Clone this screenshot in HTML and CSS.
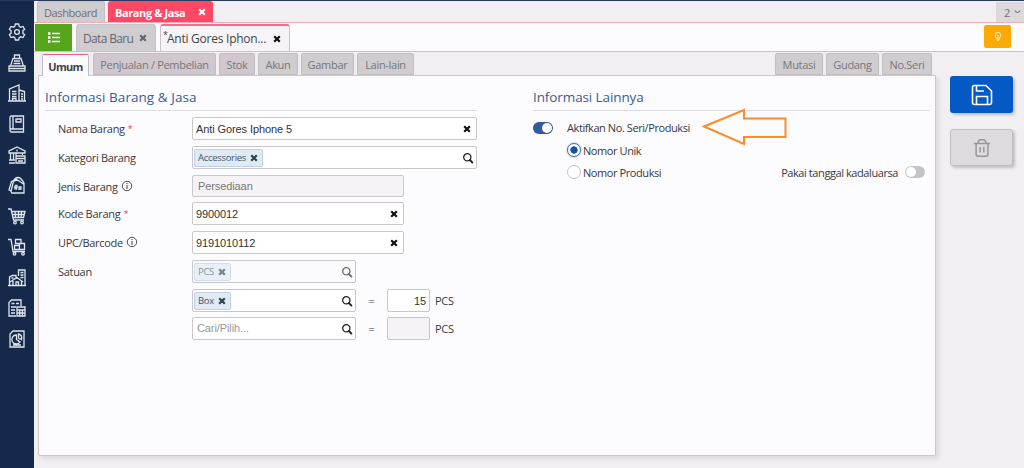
FILE: index.html
```html
<!DOCTYPE html>
<html lang="id">
	<head>
		<meta charset="UTF-8" />
		<meta name="viewport" content="width=device-width, initial-scale=1.0" />
		<title>Barang &amp; Jasa</title>
		<link rel="stylesheet" href="styles.css" />
	</head>
	<body>
		<svg class="defs" width="0" height="0">
			<symbol id="times" viewBox="0 0 10 10">
				<path d="M2.200 2.200l5.600 5.600M7.800 2.200l-5.600 5.600" fill="none" stroke="currentColor" stroke-width="2.200" />
			</symbol>
			<symbol id="search" viewBox="0 0 12 12">
				<circle cx="5.300" cy="5.300" r="3.600" fill="none" stroke="currentColor" stroke-width="1.300" />
				<path d="M7.900 8l2.500 2.600" stroke="currentColor" stroke-width="1.900" stroke-linecap="round" />
			</symbol>
			<symbol id="info" viewBox="0 0 12 12">
				<circle cx="6" cy="6" r="4.700" fill="none" stroke="currentColor" stroke-width="0.900" />
				<path d="M6 5v4M6 3v1.100" stroke="currentColor" stroke-width="1" />
			</symbol>
		</svg>
		<div class="app">
			<nav class="sidebar">
				<!-- settings -->
				<svg viewBox="0 0 18 18">
					<path d="M7.400 1h3.200l.6 2.300 1.500.9 2.300-.7 1.600 2.800-1.700 1.600v2.200l1.700 1.600-1.600 2.800-2.300-.7-1.500.9-.6 2.300H7.400l-.6-2.300-1.500-.9-2.300.7-1.600-2.800 1.700-1.600V7.900L1.400 6.300 3 3.500l2.300.7 1.500-.9z" />
					<circle cx="9" cy="9" r="2.400" />
				</svg>
				<!-- cash register -->
				<svg viewBox="0 0 18 18">
					<path d="M6.500 1h5v3.500h-5zM5 4.500h8l2.500 7.500h-13zM1 12h16v5H1zM1 14.500h16M6 7h6M5.500 9.500h7" />
				</svg>
				<!-- company -->
				<svg viewBox="0 0 18 18">
					<path d="M1.500 17V5L11 1v16M11 6l5.500 1.500V17M0 17h18M4 7.500h4.500M4 10h4.500M4 12.500h4.500M4.500 17v-2.500H8V17M13 10h2M13 12.500h2M13 15h2" />
				</svg>
				<!-- ledger -->
				<svg viewBox="0 0 18 18">
					<path d="M3.500 1H15.500v16H3.500q-1.500 0-1.500-1.500v-13Q2 1 3.500 1zM2 14h13.500M5 1v13M8 4h5v3H8z" />
				</svg>
				<!-- bank -->
				<svg viewBox="0 0 18 18">
					<path d="M9 1l8 4v2H1V5zM2.500 7v7M5.500 7v7M8 7v3M14.500 7v2M1 14h6M1 17h6M8 10h9v7H8zM8 12.500h9M10 15h5M9 3.500v2" />
				</svg>
				<!-- price tag -->
				<svg viewBox="0 0 18 18">
					<path d="M5.500 5Q7 1.500 10 1.500T16 7v10H4L3 15.500 5.500 5l4-1 6 4M3 15L1 14l2.500-8.500L9 3M7 9.500v4M7 9.500h2v2H7l2 2M11 14v-3h2v2h-2" />
				</svg>
				<!-- sales -->
				<svg viewBox="0 0 18 18">
					<path d="M0 2h3l2.500 11H16M3.500 4.500H17L15.500 10.500H5M4.500 7.500h12M7 4.500l.5 6M10.500 4.500v6M13.500 4.500l-.5 6" />
					<circle cx="7" cy="15.500" r="1.300" />
					<circle cx="14" cy="15.500" r="1.300" />
				</svg>
				<!-- purchases -->
				<svg viewBox="0 0 18 18">
					<path d="M0 1.500h3L5 13.500h12M6.500 7.500h5v4h-5zM11.500 5.500h5v6h-5zM7.500 1.500h5.500v4H7.500z" />
					<circle cx="6.500" cy="15.800" r="1.300" />
					<circle cx="15" cy="15.800" r="1.300" />
				</svg>
				<!-- fixed assets -->
				<svg viewBox="0 0 18 18">
					<path d="M10.500 7V1H17v15.500M1.500 16.500V8l3-1.500H8V10M12.500 3.500h3M12.500 6h3M12.500 8.500h3M3.500 9h2M2 13l7-4.500 6 4.500M5 12v4.500M13.500 12v4.500M8 16v-3h2.500v3M0 16.500h18" />
				</svg>
				<!-- tax -->
				<svg viewBox="0 0 18 18">
					<path d="M8 17H1V3.500L3.500 1H13v6M3.500 4.500h3M8 4.500h3M3 8h5M3 11h4M3 14h4M9 8h8v9H9zM9 11h8M11.700 11v6M14.400 11v6M9 14h8" />
				</svg>
				<!-- reports -->
				<svg viewBox="0 0 18 18">
					<path d="M5 1h11v16H2V4zM8.500 5v4.500L12 12A4.500 4.500 0 1 1 8.500 5zM10.500 4v4l3 1.500Q14.500 5 10.500 4zM5 15h8" />
				</svg>
			</nav>
			<div class="main">
				<header class="module-tabs">
					<a class="mtab">Dashboard</a>
					<a class="mtab active">Barang &amp; Jasa <svg class="x"><use href="#times" /></svg></a>
					<a class="counter">2
						<svg viewBox="0 0 8 6"><path d="M1 1.500q3 4 6 0" fill="none" stroke="#777" stroke-width="1.200" /></svg>
					</a>
				</header>
				<div class="doc-tabs">
					<a class="list-btn">
						<svg viewBox="0 0 14 12"><path d="M5 2h8M5 6h8M5 10h8" stroke-width="1.500" /><path d="M1 2h2.500M1 6h2.500M1 10h2.500" stroke-width="2.500" /></svg>
					</a>
					<a class="dtab">Data Baru <svg class="x"><use href="#times" /></svg></a>
					<a class="dtab active"><sup>*</sup><span>Anti Gores Iphon...</span><svg class="x"><use href="#times" /></svg></a>
					<a class="hint-btn">
						<svg viewBox="0 0 10 12"><path d="M3.500 7.500Q1.800 6.200 2 4.500A3 3 0 0 1 8 4.500Q8.200 6.200 6.500 7.500V9h-3zM3.800 10.500h2.400M5 8V5M4 4.500l1 1 1-1" /></svg>
					</a>
				</div>
				<div class="content">
					<div class="form">
						<div class="tabs">
							<a class="tab active">Umum</a>
							<a class="tab t-jual">Penjualan / Pembelian</a>
							<a class="tab t-stok">Stok</a>
							<a class="tab t-akun">Akun</a>
							<a class="tab t-gambar">Gambar</a>
							<a class="tab t-lain">Lain-lain</a>
							<a class="tab t-mutasi">Mutasi</a>
							<a class="tab t-gudang">Gudang</a>
							<a class="tab t-seri">No.Seri</a>
						</div>
						<div class="panel">
							<section class="col-left">
								<h2>Informasi Barang &amp; Jasa</h2>
								<div class="rows">
									<label>Nama Barang <i>*</i></label>
									<div class="input wide"><span>Anti Gores Iphone 5</span><svg class="x"><use href="#times" /></svg></div>
									<label>Kategori Barang</label>
									<div class="input wide lookup">
										<b class="chip">Accessories <svg class="x"><use href="#times" /></svg></b>
										<svg class="search"><use href="#search" /></svg>
									</div>
									<label>Jenis Barang <svg class="info"><use href="#info" /></svg></label>
									<div class="input mid disabled"><span>Persediaan</span></div>
									<label>Kode Barang <i>*</i></label>
									<div class="input mid"><span>9900012</span><svg class="x"><use href="#times" /></svg></div>
									<label>UPC/Barcode <svg class="info"><use href="#info" /></svg></label>
									<div class="input mid"><span>9191010112</span><svg class="x"><use href="#times" /></svg></div>
									<label>Satuan</label>
									<div class="input short lookup faded">
										<b class="chip">PCS <svg class="x"><use href="#times" /></svg></b>
										<svg class="search"><use href="#search" /></svg>
									</div>
									<div class="unit">
										<div class="input short lookup">
											<b class="chip">Box <svg class="x"><use href="#times" /></svg></b>
											<svg class="search"><use href="#search" /></svg>
										</div>
										<em>=</em>
										<div class="input qty">15</div>
										<span>PCS</span>
									</div>
									<div class="unit">
										<div class="input short lookup">
											<span class="placeholder">Cari/Pilih...</span>
											<svg class="search"><use href="#search" /></svg>
										</div>
										<em>=</em>
										<div class="input qty disabled"></div>
										<span>PCS</span>
									</div>
								</div>
							</section>
							<section class="col-right">
								<h2>Informasi Lainnya</h2>
								<div class="opt">
									<span class="switch on"></span>
									<span class="opt-label">Aktifkan No. Seri/Produksi</span>
									<svg class="arrow" viewBox="0 0 86 38">
										<path d="M2 18.500L42 2v8.500h41.500v18.500H42v7z" />
									</svg>
								</div>
								<div class="opt sub"><span class="radio on"></span><span>Nomor Unik</span></div>
								<div class="opt sub">
									<span class="radio"></span><span>Nomor Produksi</span>
									<span class="expire">Pakai tanggal kadaluarsa</span><span class="switch"></span>
								</div>
							</section>
						</div>
					</div>
					<aside class="actions">
						<a class="action save">
							<svg viewBox="0 0 22 22"><path d="M3.500 1.500H15L20.500 7V18.500q0 2-2 2h-15q-2 0-2-2v-15q0-2 2-2zM5.500 20V12.500h11V20M5.500 2v5h7.500" /></svg>
						</a>
						<a class="action trash">
							<svg viewBox="0 0 22 22"><path d="M2 6h18M4.500 6v12q0 2 2 2h9q2 0 2-2V6M6.500 5.500Q7 2 9.500 2h3Q15 2 15.500 5.500M9 10v6M13 10v6" /></svg>
						</a>
					</aside>
				</div>
			</div>
		</div>
	</body>
</html>
```
FILE: styles.css
```css
* {
	box-sizing: border-box;
}
body {
	margin: 0;
	height: 468px;
	overflow: hidden;
	font-family: "Open Sans", "Noto Sans", sans-serif;
	font-size: 11px;
	letter-spacing: -0.3px;
	color: #3a3a40;
	background: #f1eff2;
}
.defs {
	position: absolute;
}
.app {
	display: flex;
	height: 468px;
	border-top: 1px solid #2b3c5a;
}
.sidebar {
	width: 34px;
	background: #16294a;
	display: flex;
	flex-direction: column;
	align-items: center;
	gap: 12.7px;
	padding-top: 22px;
}
.sidebar svg {
	width: 18px;
	height: 18px;
	flex: none;
	fill: none;
	stroke: #dfe5ee;
	stroke-width: 1.3;
}
.main {
	flex: 1;
	display: flex;
	flex-direction: column;
	min-width: 0;
}
.x {
	width: 10px;
	height: 10px;
	flex: none;
}

/* module tabs */
.module-tabs {
	height: 22px;
	display: flex;
	align-items: flex-end;
	padding-left: 3px;
	border-bottom: 1px solid #f3a9b6;
}
.mtab {
	display: flex;
	align-items: center;
	height: 21px;
	width: 68px;
	padding-left: 6px;
	margin-right: 3px;
	font-size: 11px;
	letter-spacing: -0.4px;
	color: #707074;
	background: #cfcdd0;
	border: 1px solid #c2c0c4;
	border-bottom: 0;
	border-radius: 3px 3px 0 0;
}
.mtab.active {
	width: 105px;
	justify-content: space-between;
	padding: 1px 6px 0 7px;
	font-weight: 700;
	color: #fff;
	background: #ff4865;
	border: 0;
	letter-spacing: -0.4px;
}
.counter {
	margin-left: auto;
	width: 28px;
	height: 20px;
	display: flex;
	align-items: center;
	padding-left: 8px;
	gap: 4px;
	color: #707074;
	background: #dbd9dc;
}
.counter svg {
	width: 7px;
	height: 6px;
}

/* open documents */
.doc-tabs {
	height: 29px;
	display: flex;
	align-items: flex-end;
	padding-left: 1px;
	background: #fcfbfd;
	border-bottom: 1px solid #c6c4c8;
}
.list-btn {
	width: 37px;
	height: 27px;
	margin-right: 4px;
	display: flex;
	align-items: center;
	justify-content: center;
	background: #57a51c;
}
.list-btn svg {
	width: 14px;
	height: 13px;
	stroke: #fff;
}
.dtab {
	width: 80px;
	height: 27px;
	display: flex;
	align-items: center;
	justify-content: space-between;
	padding: 0 7px 0 6px;
	margin-right: 4px;
	font-size: 12px;
	letter-spacing: -0.65px;
	color: #66666a;
	background: #cfcdd0;
	border: 1px solid #c6c4c8;
	border-bottom: 0;
	border-radius: 3px 3px 0 0;
}
.dtab.active {
	width: 130px;
	padding: 0 7px 0 2px;
	letter-spacing: -0.25px;
	color: #444;
	background: #f6f4f7;
	border-top: 2px solid #f0708a;
}
.dtab sup {
	width: 4px;
	font-size: 9px;
	line-height: 10px;
	align-self: flex-start;
	margin-top: 4px;
}
.dtab.active span {
	flex: 1;
}
.dtab.active .x {
	color: #111;
}
.hint-btn {
	width: 27px;
	height: 23px;
	margin: 0 13px 3px auto;
	display: flex;
	align-items: center;
	justify-content: center;
	background: #fca903;
	border-radius: 2px;
}
.hint-btn svg {
	width: 10px;
	height: 11px;
	fill: none;
	stroke: #fff3d0;
	stroke-width: 1;
}

.content {
	flex: 1;
	display: flex;
}
.form {
	width: 902px;
	flex: none;
	padding-left: 4px;
}
.tabs {
	height: 23px;
	display: flex;
	align-items: flex-end;
	gap: 3px;
	padding: 0 4px 0 4px;
}
.tab {
	height: 22px;
	padding-top: 1px;
	display: flex;
	align-items: center;
	justify-content: center;
	white-space: nowrap;
	color: #77757a;
	background: #cfcdd0;
	border: 1px solid #c0bec2;
	border-radius: 2px 2px 0 0;
}
.tab.active {
	width: 47px;
	height: 22px;
	margin-right: 1px;
	margin-bottom: -1px;
	font-weight: 700;
	letter-spacing: -0.7px;
	color: #444;
	background: #fcfbfd;
	border-top: 1px solid #f0607c;
	border-bottom: 0;
	position: relative;
}
.t-jual { width: 123px; background: #d0c8ce; }
.t-stok { width: 36px; background: #d0c8ce; }
.t-akun { width: 40px; }
.t-gambar { width: 53px; }
.t-lain { width: 57px; }
.t-mutasi { width: 48px; margin-left: auto; }
.t-gudang { width: 53px; }
.t-seri { width: 50px; }

.panel {
	height: 381px;
	display: flex;
	background: #fcfbfd;
	border: 1px solid #cac8cc;
	border-radius: 0 0 2px 2px;
	box-shadow: 3px 3px 5px rgba(0, 0, 0, 0.09);
	padding: 11px 5px 0 6px;
}
.col-left {
	width: 432px;
	margin-right: 56px;
}
.col-right {
	width: 397px;
}
h2 {
	margin: 0 0 6px;
	height: 24px;
	line-height: 21px;
	font-size: 13.5px;
	font-weight: 400;
	letter-spacing: 0.05px;
	color: #3d5d8f;
	border-bottom: 1px solid #dddce2;
}
.col-right h2 {
	letter-spacing: -0.1px;
	margin-bottom: 5px;
}
.rows {
	display: grid;
	grid-template-columns: 134px 1fr;
	grid-template-rows: 29px 29px 27px 29px 29px 29px 28px 24px;
	padding-left: 13px;
}
label {
	height: 22px;
	display: flex;
	align-items: center;
	gap: 3px;
}
label i {
	font-size: 9px;
	color: #ee4050;
	font-style: normal;
}
.info {
	width: 12px;
	height: 12px;
}
.input {
	height: 23px;
	display: flex;
	align-items: center;
	justify-content: space-between;
	padding: 0 4px 0 3px;
	font: 11px "Liberation Sans", Arial, sans-serif;
	letter-spacing: -0.1px;
	color: #333;
	background: #fff;
	border: 1px solid #c9c7cb;
	border-radius: 2px;
}
.input .x {
	color: #111;
}
.wide { width: 285px; }
.mid { width: 212px; }
.short { width: 164px; }
.input.lookup {
	padding: 0 2px 0 1px;
}
.disabled {
	height: 22px;
	color: #77757a;
	background: #f5f3f5;
	padding-left: 5px;
}
.search {
	width: 12px;
	height: 12px;
	color: #222;
}
.chip {
	height: 18px;
	display: flex;
	align-items: center;
	gap: 3px;
	padding: 0 3px;
	font: 9.5px "Open Sans", sans-serif;
	letter-spacing: -0.3px;
	color: #44586c;
	background: #dfeaf3;
	border: 1px solid #bfd0e4;
	border-radius: 2px;
}
.input .chip .x {
	color: #33404e;
}
.faded {
	background: #fbfafc;
}
.faded .chip,
.faded .search {
	opacity: 0.65;
}
.unit {
	grid-column: 2;
	display: flex;
}
.unit em {
	width: 31px;
	line-height: 23px;
	text-align: center;
	font-style: normal;
}
.unit span {
	line-height: 23px;
}
.input.qty {
	width: 43px;
	height: 23px;
	justify-content: flex-end;
	padding-right: 3px;
	margin-right: 5px;
}
.unit .placeholder {
	padding-left: 3px;
	color: #98969b;
}

/* right column */
.opt {
	height: 23px;
	display: flex;
	align-items: center;
	letter-spacing: -0.42px;
}
.opt-label {
	width: 137px;
	padding-left: 14px;
	white-space: nowrap;
}
.opt.sub {
	height: 22px;
	padding-left: 34px;
}
.switch {
	width: 20px;
	height: 12px;
	flex: none;
	border-radius: 6px;
	background: #c5c3c7;
	padding: 1px;
}
.switch::before {
	content: "";
	display: block;
	width: 10px;
	height: 10px;
	border-radius: 5px;
	background: #fff;
}
.switch.on {
	background: #31599b;
}
.switch.on::before {
	margin-left: 8px;
}
.radio {
	width: 14px;
	height: 14px;
	margin-right: 2px;
	border: 1px solid #c6c4ca;
	border-radius: 50%;
	background: #fff;
}
.radio.on {
	border-color: #3d6ca8;
	background: radial-gradient(circle, #1552a0 3.3px, #fff 4px);
	box-shadow: 0 0 2px #6f9ad0;
}
.expire {
	margin: 0 7px 0 auto;
}
.opt.sub .switch {
	margin-right: 5px;
}
.arrow {
	width: 86px;
	height: 38px;
	margin: -10px 0 -8px 12px;
	fill: none;
	stroke: #fb8c28;
	stroke-width: 2;
}

.actions {
	padding: 24px 0 0 14px;
	display: flex;
	flex-direction: column;
	gap: 16px;
}
.action {
	width: 63px;
	height: 37px;
	display: flex;
	align-items: center;
	justify-content: center;
	border-radius: 3px;
	box-shadow: 2px 2px 3px rgba(0, 0, 0, 0.2);
}
.action svg {
	width: 22px;
	height: 22px;
	fill: none;
	stroke: #fff;
	stroke-width: 1.6;
}
.save {
	background: #0559c4;
}
.trash {
	background: #dddbde;
	border: 1px solid #c0bec2;
}
.trash svg {
	width: 20px;
	height: 20px;
	stroke: #98969a;
}
```
